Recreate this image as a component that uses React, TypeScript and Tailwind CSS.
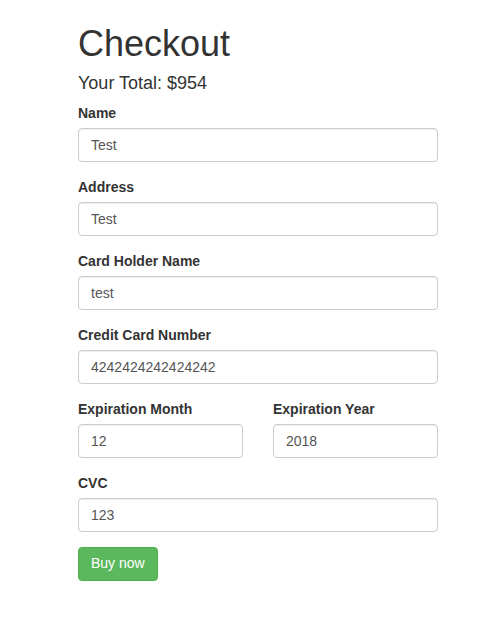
export default function App() {
  const inputCls =
    "block w-full h-[34px] px-3 py-[6px] text-[14px] leading-[1.42857] text-[#555] bg-white border border-[#ccc] rounded-[4px] shadow-[inset_0_1px_1px_rgba(0,0,0,0.075)] outline-none";
  const labelCls = "block mb-[5px] text-[14px] leading-[20px] font-bold text-[#333]";

  return (
    <div className="min-h-screen bg-white font-['Liberation_Sans',Arial,sans-serif] text-[#333] text-[14px]">
      <div className="ml-[78px] w-[360px] pt-[24px]">
        <h1 className="text-[36px] leading-[1.1] font-medium mb-[10px]">Checkout</h1>
        <h4 className="text-[18px] leading-[1.1] font-medium mb-[10px]">Your Total: $954</h4>
        <form onSubmit={(e) => e.preventDefault()}>
          <div className="mb-[15px]">
            <label className={labelCls}>Name</label>
            <input className={inputCls} defaultValue="Test" />
          </div>
          <div className="mb-[15px]">
            <label className={labelCls}>Address</label>
            <input className={inputCls} defaultValue="Test" />
          </div>
          <div className="mb-[15px]">
            <label className={labelCls}>Card Holder Name</label>
            <input className={inputCls} defaultValue="test" />
          </div>
          <div className="mb-[15px]">
            <label className={labelCls}>Credit Card Number</label>
            <input className={inputCls} defaultValue="4242424242424242" />
          </div>
          <div className="grid grid-cols-2 gap-x-[30px]">
            <div className="mb-[15px]">
              <label className={labelCls}>Expiration Month</label>
              <input className={inputCls} defaultValue="12" />
            </div>
            <div className="mb-[15px]">
              <label className={labelCls}>Expiration Year</label>
              <input className={inputCls} defaultValue="2018" />
            </div>
          </div>
          <div className="mb-[15px]">
            <label className={labelCls}>CVC</label>
            <input className={inputCls} defaultValue="123" />
          </div>
          <button
            type="submit"
            className="h-[34px] px-3 py-[6px] text-[14px] leading-[1.42857] text-white bg-[#5cb85c] border border-[#4cae4c] rounded-[4px]"
          >
            Buy now
          </button>
        </form>
      </div>
    </div>
  );
}
